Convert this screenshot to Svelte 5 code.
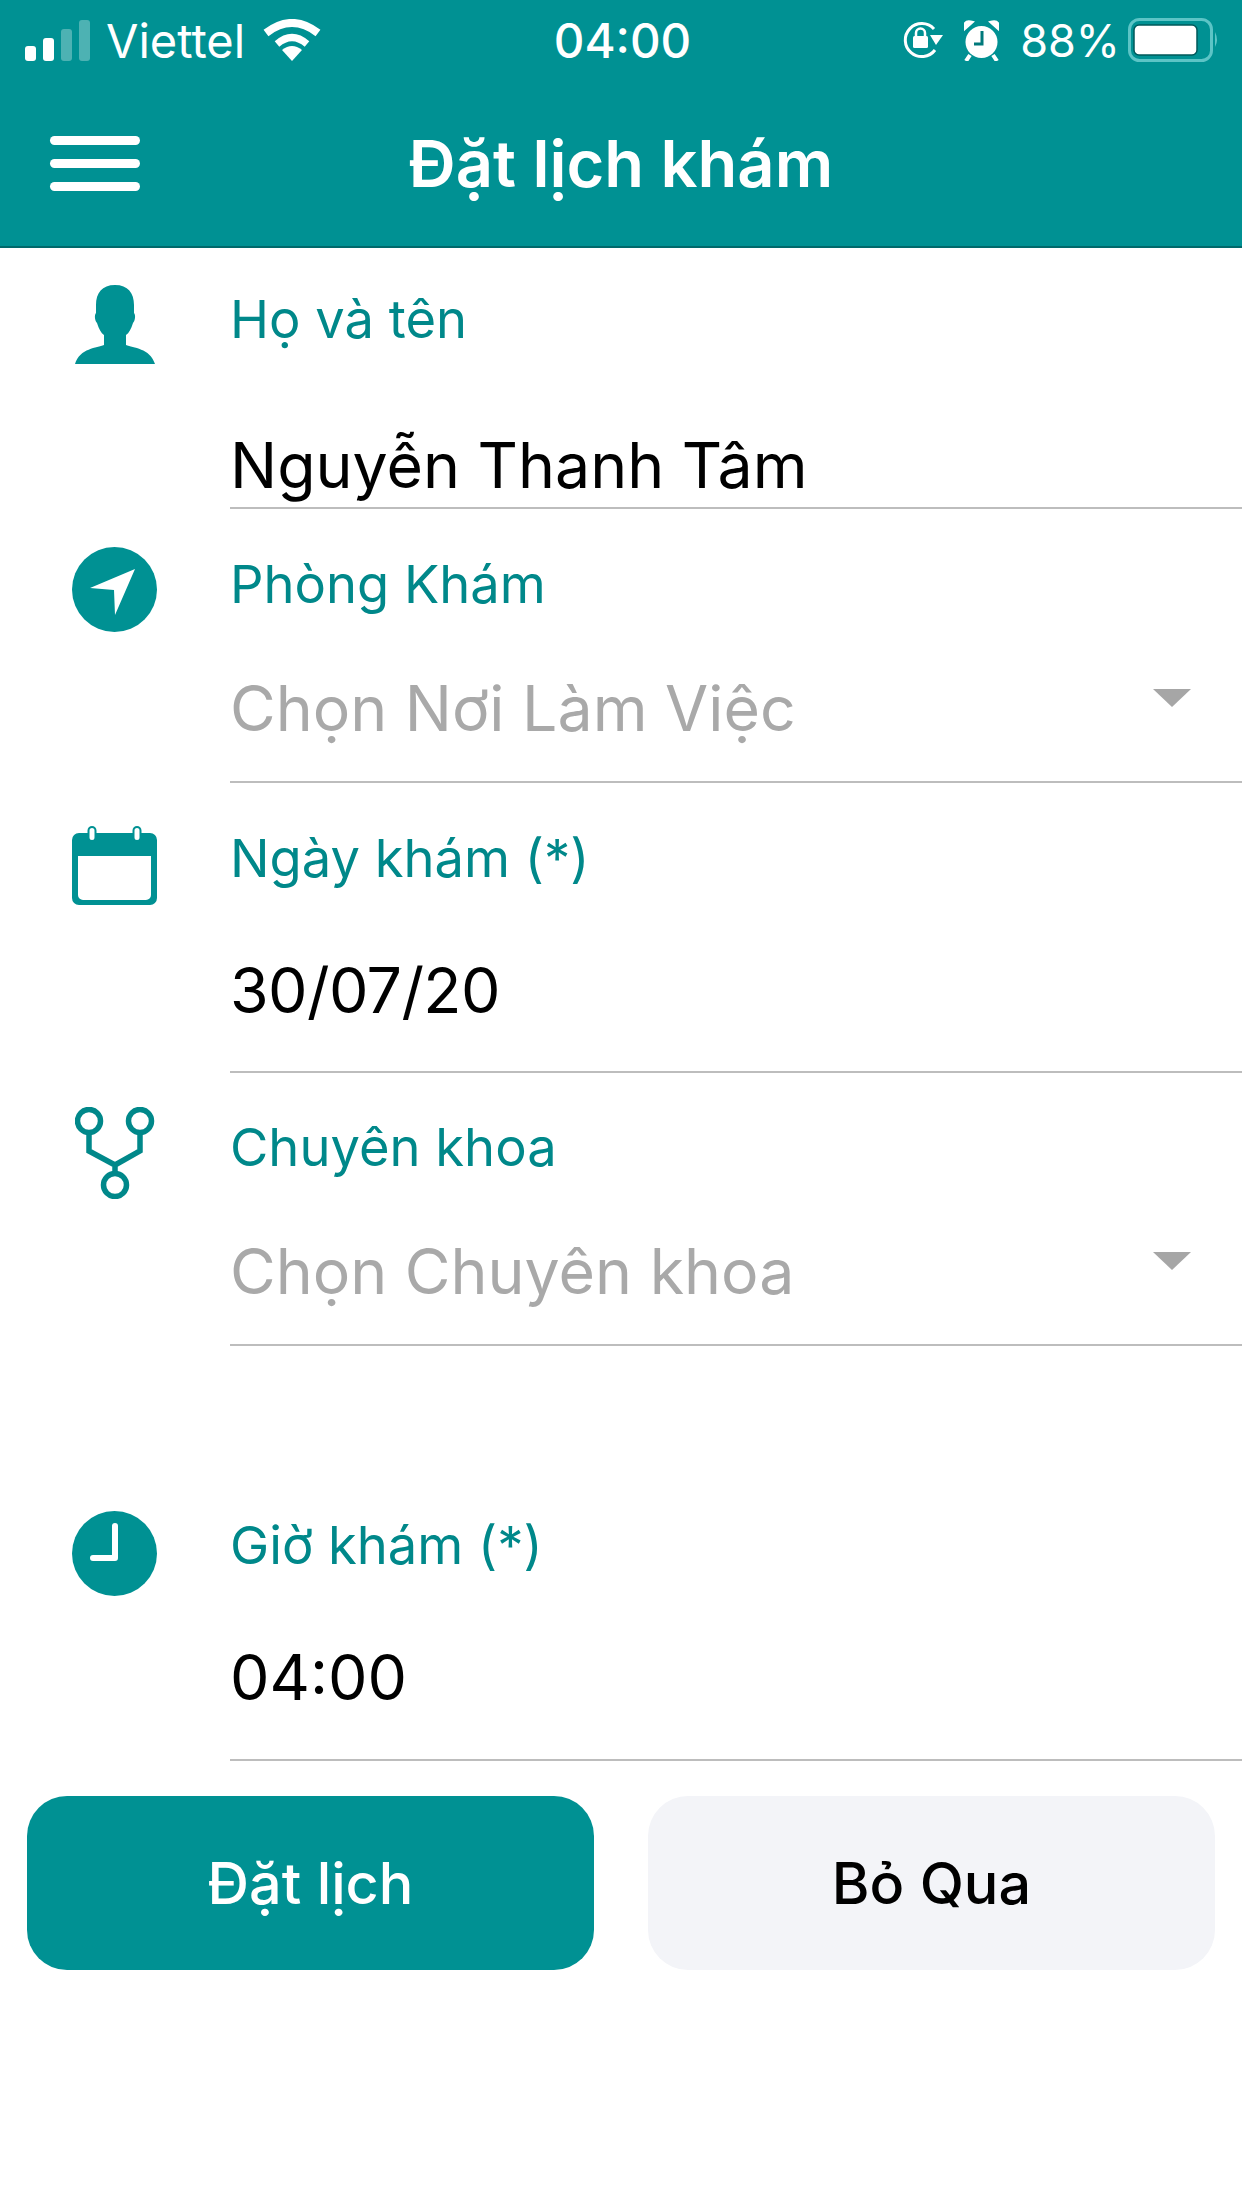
<script>
  const signal = [
    { h: 15, o: 1 },
    { h: 23, o: 1 },
    { h: 32, o: 0.3 },
    { h: 41, o: 0.3 }
  ];
</script>

<div class="page">
  <header class="head">
    <div class="status">
      <div class="side left">
        <div class="bars">
          {#each signal as b}
            <span class="bar" style="height:{b.h}px;opacity:{b.o}"></span>
          {/each}
        </div>
        <span class="carrier">Viettel</span>
        <svg class="wifi" width="58" height="42" viewBox="0 0 58 42">
          <path d="M29 42 L19 31 Q29 23 39 31 Z" fill="#fff"/>
          <path d="M14 25 Q29 12 44 25" fill="none" stroke="#fff" stroke-width="7"/>
          <path d="M3 14 Q29 -6 55 14" fill="none" stroke="#fff" stroke-width="8"/>
        </svg>
      </div>
      <span class="time">04:00</span>
      <div class="side right">
        <svg class="rot" width="41" height="38" viewBox="0 0 41 38">
          <path d="M33 29 A16.5 16.5 0 1 1 32 8" fill="none" stroke="#fff" stroke-width="3"/>
          <path d="M28 14 L41 14 L34 24 Z" fill="#fff"/>
          <rect x="11" y="15" width="15" height="12" rx="1.5" fill="#fff"/>
          <path d="M14 16 V12 a4.5 4.5 0 0 1 9 0 V16" fill="none" stroke="#fff" stroke-width="2.5"/>
        </svg>
        <svg class="alarm" width="35" height="41" viewBox="0 0 35 41">
          <circle cx="17.5" cy="22" r="16" fill="#fff"/>
          <path d="M1 9 L9 2 Q3 0 1 3 Z M34 9 L26 2 Q32 0 34 3 Z" fill="#fff" stroke="#fff" stroke-width="2"/>
          <path d="M6 35 L2 41 M29 35 L33 41" stroke="#fff" stroke-width="4"/>
          <path d="M18 11 V24 H10" fill="none" stroke="#00797b" stroke-width="3"/>
        </svg>
        <span class="pct">88%</span>
        <svg class="batt" width="92" height="44" viewBox="0 0 92 44">
          <rect x="1.5" y="1.5" width="82" height="41" rx="10" fill="none" stroke="#5cc4c6" stroke-width="3"/>
          <rect x="6" y="7" width="63" height="30" rx="5" fill="#fff" stroke="#00585a" stroke-width="1.5"/>
          <path d="M87 14 Q91 22 87 29 Z" fill="#5cc4c6"/>
        </svg>
      </div>
    </div>
    <div class="nav">
      <div class="burger"><span></span><span></span><span></span></div>
      <h1>Đặt lịch khám</h1>
      <div></div>
    </div>
  </header>

  <section class="row r1">
    <div class="ic">
      <svg width="80" height="79" viewBox="0 0 80 79">
        <path d="M40 0 C53 0 59 8 59 20 L59 28 C61 30 60 36 58 38 C56 44 54 48 51 50 L51 60 C58 63 75 63 80 79 L0 79 C5 63 22 63 29 60 L29 50 C26 48 24 44 22 38 C20 36 19 30 21 28 L21 20 C21 8 27 0 40 0 Z" fill="#009193"/>
      </svg>
    </div>
    <div class="field">
      <div class="label">Họ và tên</div>
      <div class="value">Nguyễn Thanh Tâm</div>
    </div>
  </section>

  <section class="row r2">
    <div class="ic">
      <svg width="85" height="85" viewBox="0 0 85 85">
        <circle cx="42.5" cy="42.5" r="42.5" fill="#009193"/>
        <path d="M63 22 L18 41 L42 43 L43 68 Z" fill="#fff"/>
      </svg>
    </div>
    <div class="field">
      <div class="label">Phòng Khám</div>
      <div class="value ph">Chọn Nơi Làm Việc<span class="tri"></span></div>
    </div>
  </section>

  <section class="row r3">
    <div class="ic">
      <svg width="85" height="79" viewBox="0 0 85 79">
        <path fill-rule="evenodd" d="M7 7 H78 A7 7 0 0 1 85 14 V72 A7 7 0 0 1 78 79 H7 A7 7 0 0 1 0 72 V14 A7 7 0 0 1 7 7 Z M6 30 V69 A5 5 0 0 0 11 74 H74 A5 5 0 0 0 79 69 V30 Z" fill="#009193"/>
        <rect x="16.5" y="1" width="7" height="14" rx="3.5" fill="#fff" stroke="#009193" stroke-width="2"/>
        <rect x="61.5" y="1" width="7" height="14" rx="3.5" fill="#fff" stroke="#009193" stroke-width="2"/>
      </svg>
    </div>
    <div class="field">
      <div class="label">Ngày khám (*)</div>
      <div class="value date">30/07/20</div>
    </div>
  </section>

  <section class="row r4">
    <div class="ic">
      <svg width="80" height="92" viewBox="0 0 80 92" fill="none" stroke="#00888a" stroke-width="5.5">
        <circle cx="14" cy="14" r="11.5"/>
        <circle cx="65" cy="14" r="11.5"/>
        <circle cx="40" cy="78" r="11.5"/>
        <path d="M14 26 V44 L40 58 L65 44 V26 M40 58 V66"/>
      </svg>
    </div>
    <div class="field">
      <div class="label">Chuyên khoa</div>
      <div class="value ph">Chọn Chuyên khoa<span class="tri"></span></div>
    </div>
  </section>

  <section class="row r5">
    <div class="ic">
      <svg width="85" height="85" viewBox="0 0 85 85">
        <circle cx="42.5" cy="42.5" r="42.5" fill="#009193"/>
        <path d="M43 15 V47 H21" fill="none" stroke="#fff" stroke-width="6" stroke-linecap="round" stroke-linejoin="round"/>
      </svg>
    </div>
    <div class="field">
      <div class="label">Giờ khám (*)</div>
      <div class="value">04:00</div>
    </div>
  </section>

  <div class="actions">
    <button class="btn primary">Đặt lịch</button>
    <button class="btn ghost">Bỏ Qua</button>
  </div>
</div>

<style>
  :global(body) { margin: 0; background: #fff; }
  .page {
    width: 1242px;
    height: 2208px;
    overflow: hidden;
    background: #fff;
    font-family: Inter, "Noto Sans", sans-serif;
  }
  .head {
    background: #009193;
    color: #fff;
    height: 248px;
    box-sizing: border-box;
    border-bottom: 2px solid #00696b;
  }
  .status {
    height: 80px;
    display: grid;
    grid-template-columns: 1fr auto 1fr;
    align-items: center;
    padding: 0 22px 0 25px;
  }
  .side { display: flex; align-items: center; }
  .right { justify-content: flex-end; }
  .bars { display: flex; align-items: flex-end; gap: 7px; height: 41px; }
  .bar { width: 11px; background: #fff; border-radius: 3px; }
  .carrier { font-size: 47px; font-weight: 400; margin-left: 16px; }
  .wifi { margin-left: 18px; }
  .time { font-size: 47.5px; font-weight: 500; }
  .rot { margin-right: 21px; }
  .alarm { margin-right: 21px; }
  .pct { font-size: 45px; margin-right: 8px; }
  .nav {
    height: 166px;
    display: grid;
    grid-template-columns: 1fr auto 1fr;
    align-items: center;
    padding-left: 50px;
  }
  .burger { display: flex; flex-direction: column; gap: 14px; }
  .burger span { width: 90px; height: 9px; border-radius: 5px; background: #fff; }
  h1 { margin: 0 50px 0 0; font-size: 65px; font-weight: 600; }

  .row { display: grid; grid-template-columns: 230px 1fr; box-sizing: border-box; }
  .ic { padding-left: 72px; }
  .ic svg { display: block; }
  .field { border-bottom: 2px solid #bdbdbd; display: flex; flex-direction: column; }
  .label { font-size: 52.5px; line-height: 50px; color: #00888a; }
  .value {
    font-size: 62.6px;
    line-height: 70px;
    color: #000;
    display: flex;
    justify-content: space-between;
    align-items: flex-start;
    padding-right: 51px;
  }
  .date { letter-spacing: -0.6px; }
  .ph { color: #a9a9a9; }
  .tri {
    margin-top: 16px;
    width: 0;
    height: 0;
    border-left: 19px solid transparent;
    border-right: 19px solid transparent;
    border-top: 18px solid #a6a6a6;
  }
  .r1 { height: 261px; }
  .r1 .ic { padding: 37px 0 0 75px; }
  .r1 .field { padding-top: 46px; }
  .r1 .label { margin-bottom: 86px; }
  .r2 { height: 274px; }
  .r2 .ic { padding-top: 38px; }
  .r2 .field { padding-top: 50px; }
  .r2 .label { margin-bottom: 64px; }
  .r3 { height: 290px; }
  .r3 .ic { padding-top: 43px; }
  .r3 .field { padding-top: 50px; }
  .r3 .label { margin-bottom: 72px; }
  .r4 { height: 273px; }
  .r4 .ic { padding: 34px 0 0 75px; }
  .r4 .field { padding-top: 49px; }
  .r4 .label { margin-bottom: 64px; }
  .r5 { height: 415px; }
  .r5 .ic { padding-top: 165px; }
  .r5 .field { padding-top: 174px; }
  .r5 .label { margin-bottom: 72px; }

  .actions {
    display: grid;
    grid-template-columns: 567px 567px;
    gap: 54px;
    padding: 35px 0 0 27px;
  }
  .btn {
    height: 174px;
    border: 0;
    border-radius: 40px;
    font-family: Inter, sans-serif;
    font-size: 57.5px;
    font-weight: 500;
    padding: 0;
  }
  .primary { background: #009193; color: #fff; }
  .ghost { background: #f3f4f8; color: #000; }
</style>
